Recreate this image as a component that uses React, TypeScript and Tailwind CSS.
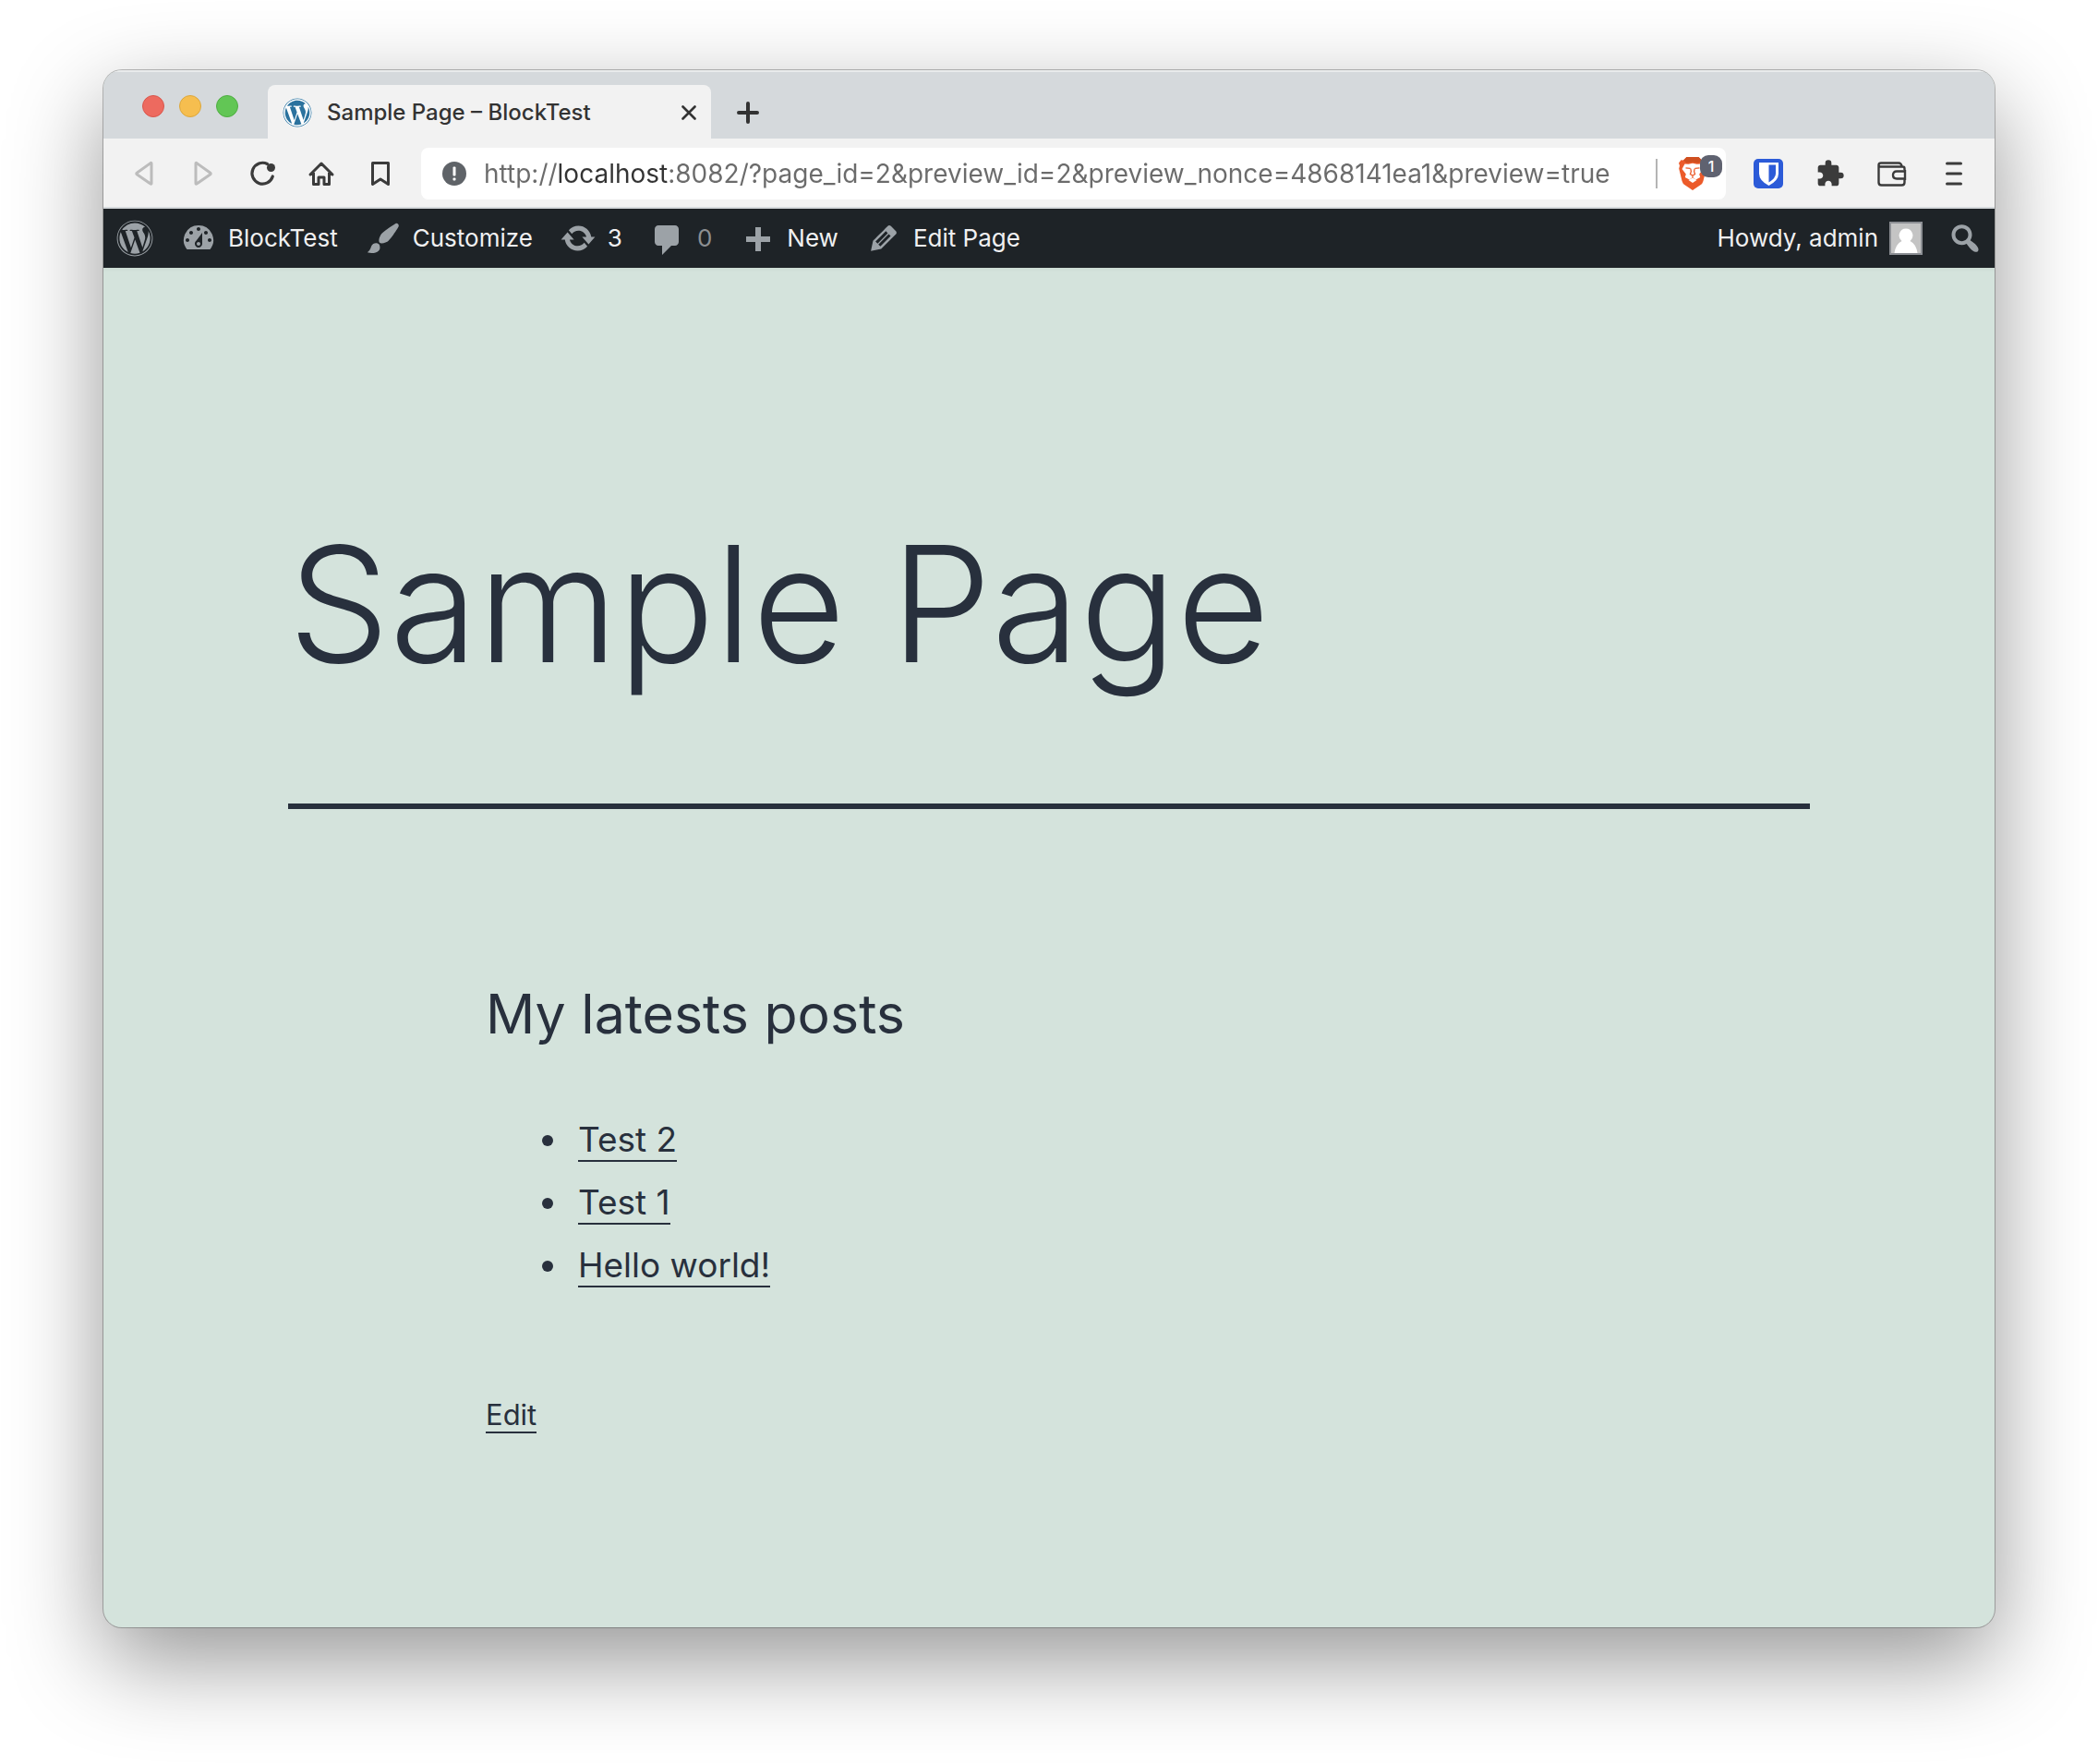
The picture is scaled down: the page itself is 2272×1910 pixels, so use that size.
import React from "react";
import { FaWordpress } from "react-icons/fa";
import { MdExtension } from "react-icons/md";

const UI = "font-['Inter','Liberation_Sans',sans-serif]";

const DASH = {
  dashboard:
    "M3.76 16h12.48A7.998 7.998 0 0 0 10 3a7.998 7.998 0 0 0-6.24 13zM10 4c.55 0 1 .45 1 1s-.45 1-1 1-1-.45-1-1 .45-1 1-1zM6 6c.55 0 1 .45 1 1s-.45 1-1 1-1-.45-1-1 .45-1 1-1zm8 0c.55 0 1 .45 1 1s-.45 1-1 1-1-.45-1-1 .45-1 1-1zm-5.37 5.55L12 7v6c0 1.1-.9 2-2 2s-2-.9-2-2c0-.57.24-1.08.63-1.45zM4 10c.55 0 1 .45 1 1s-.45 1-1 1-1-.45-1-1 .45-1 1-1zm12 0c.55 0 1 .45 1 1s-.45 1-1 1-1-.45-1-1 .45-1 1-1zm-5 3c0-.55-.45-1-1-1s-1 .45-1 1 .45 1 1 1 1-.45 1-1z",
  brush:
    "M18.33 3.57s.27-.8-.31-1.36c-.53-.52-1.22-.24-1.22-.24-.61.3-5.76 3.47-7.67 5.57-.86.96-2.06 3.79-1.09 4.82.92.98 3.96-.17 4.79-1 2.06-2.06 5.21-7.17 5.5-7.79zM1.4 17.65c2.37-1.56 1.46-3.41 3.23-4.64.93-.65 2.22-.62 3.08.29.63.67.8 2.57-.16 3.46-1.57 1.45-4 1.55-6.15.89z",
  update:
    "M10.2 3.28c3.53 0 6.43 2.61 6.92 6h2.08l-3.5 4-3.5-4h2.32c-.45-1.97-2.21-3.45-4.32-3.45-1.45 0-2.73.71-3.54 1.78L4.95 5.66C6.23 4.2 8.11 3.28 10.2 3.28zm-.4 13.44c-3.52 0-6.43-2.61-6.92-6H.8l3.5-4c1.17 1.33 2.33 2.67 3.5 4H5.48c.45 1.97 2.21 3.45 4.32 3.45 1.45 0 2.73-.71 3.54-1.78l1.71 1.95c-1.28 1.46-3.15 2.38-5.25 2.38z",
  comment:
    "M5 3h9c1.1 0 2 .9 2 2v7c0 1.1-.9 2-2 2h-2l-5 5v-5H5c-1.1 0-2-.9-2-2V5c0-1.1.9-2 2-2z",
  plus: "M17 9v3h-5v5H9v-5H4V9h5V4h3v5h5z",
  edit:
    "M13.89 3.39l2.71 2.72c.46.46.42 1.24.03 1.64l-8.01 8.02-5.56 1.16 1.16-5.58s7.6-7.63 7.99-8.03c.39-.39 1.22-.39 1.68.07zm-2.73 2.79l-5.59 5.61 1.11 1.11 5.54-5.65zm-2.97 8.23l5.58-5.6-1.07-1.08-5.59 5.6z",
  search:
    "M12.14 4.18c1.87 1.87 2.11 4.75.72 6.89.12.1.22.21.36.31.2.16.47.36.81.59.34.24.56.39.66.47.42.31.73.57.94.78.32.32.6.65.84 1 .25.35.44.69.59 1.04.14.35.21.68.18 1-.02.32-.14.59-.36.81s-.49.34-.81.36c-.31.02-.65-.04-.99-.19-.35-.14-.7-.34-1.04-.59-.35-.24-.68-.52-1-.84-.21-.21-.47-.52-.77-.93-.1-.13-.25-.35-.47-.66-.22-.32-.4-.57-.56-.78-.16-.2-.29-.35-.44-.5-2.07 1.09-4.69.76-6.44-.98-2.14-2.15-2.14-5.64 0-7.78 2.15-2.15 5.63-2.15 7.78 0zm-1.41 6.36c1.36-1.37 1.36-3.58 0-4.95-1.37-1.37-3.59-1.37-4.95 0-1.37 1.37-1.37 3.58 0 4.95 1.36 1.37 3.58 1.37 4.95 0z",
};

function Dashicon({ name }: { name: keyof typeof DASH }) {
  return (
    <svg viewBox="0 0 20 20" className="size-10 shrink-0 fill-[#9ca2a7]" aria-hidden="true">
      <path d={DASH[name]} />
    </svg>
  );
}

function TabStrip() {
  return (
    <div className="flex h-[74px] items-end bg-[#d5d9dc] shadow-[inset_0_2px_0_#e9ebec]">
      <div className="flex w-[178px] gap-4 self-center pl-[42px] pt-1">
        <button aria-label="Close window" className="size-6 rounded-full border border-[#d9574d] bg-[#ed6a5f]" />
        <button aria-label="Minimize window" className="size-6 rounded-full border border-[#dca73c] bg-[#f6be4f]" />
        <button aria-label="Zoom window" className="size-6 rounded-full border border-[#4fad42] bg-[#62c655]" />
      </div>
      <div className="flex h-[58px] w-[480px] items-center rounded-t-lg bg-[#f2f2f2] px-4 pt-[2px]">
        <FaWordpress className="size-8 rounded-full bg-white text-[#2b729e]" aria-hidden="true" />
        <span className="ml-4 flex-1 text-2xl font-medium text-[#333]">Sample Page – BlockTest</span>
        <button aria-label="Close tab">
          <svg viewBox="0 0 16 16" className="size-4" fill="none" stroke="#333" strokeWidth="2.6" strokeLinecap="round">
            <path d="M1.5 1.5l13 13M14.5 1.5l-13 13" />
          </svg>
        </button>
      </div>
      <button aria-label="New tab" className="flex h-[58px] items-center pl-7 pt-[2px]">
        <svg viewBox="0 0 24 24" className="size-6" fill="none" stroke="#333" strokeWidth="4" strokeLinecap="round">
          <path d="M12 2v20M2 12h20" />
        </svg>
      </button>
    </div>
  );
}

function Toolbar() {
  return (
    <div className="flex h-[76px] items-center border-b-2 border-[#d5d9dc] bg-[#f2f2f2] pt-[2px]">
      <div className="flex items-center gap-8 pl-7">
        <button aria-label="Back">
          <svg viewBox="0 0 32 32" className="size-8" fill="none" stroke="#bcbcbc" strokeWidth="3" strokeLinejoin="round">
            <path d="M24 5v21.500q0 1-1 .5L8.500 17q-1.500-1 0-2L23 4.600q1-.6 1 .4z" />
          </svg>
        </button>
        <button aria-label="Forward">
          <svg viewBox="0 0 32 32" className="size-8" fill="none" stroke="#bcbcbc" strokeWidth="3" strokeLinejoin="round">
            <path d="M8 5v21.500q0 1 1 .5L23.500 17q1.500-1 0-2L9 4.600q-1-.6-1 .4z" />
          </svg>
        </button>
        <button aria-label="Reload">
          <svg viewBox="0 0 32 32" className="size-8" fill="none" stroke="#3b3b3b" strokeWidth="3.200" strokeLinecap="round">
            <path d="M21.500 5.500A11.400 11.400 0 1 0 27.300 19" />
            <circle cx="25.500" cy="9.500" r="4.500" fill="#3b3b3b" stroke="none" />
          </svg>
        </button>
        <button aria-label="Home">
          <svg viewBox="0 0 32 32" className="size-8" fill="none" stroke="#3b3b3b" strokeWidth="3" strokeLinecap="round" strokeLinejoin="round">
            <path d="M4 17L16 5l12 12M7.500 15v12.500h5.500V20h6v7.500h5.500V15" />
          </svg>
        </button>
        <button aria-label="Bookmark">
          <svg viewBox="0 0 32 32" className="size-8" fill="none" stroke="#3b3b3b" strokeWidth="3" strokeLinejoin="round">
            <path d="M7.500 4.500h17v23L16 22l-8.500 5.500z" />
          </svg>
        </button>
      </div>
      <div className="ml-7 flex h-14 min-w-0 flex-1 items-center rounded-lg bg-white pl-[23px] pr-1">
        <svg viewBox="0 0 26 26" className="size-[26px] shrink-0" aria-hidden="true">
          <circle cx="13" cy="13" r="13" fill="#5f6368" />
          <rect x="11.500" y="5.500" width="3" height="10" rx="1" fill="#fff" />
          <rect x="11.500" y="17.500" width="3" height="3" rx="1" fill="#fff" />
        </svg>
        <input
          aria-label="Address"
          defaultValue="http://localhost:8082/?page_id=2&preview_id=2&preview_nonce=4868141ea1&preview=true"
          className="ml-[19px] h-10 min-w-0 flex-1 bg-[linear-gradient(90deg,#6b6b6b_81px,#333_81px,#333_201px,#6b6b6b_201px)] bg-clip-text text-[28px] text-transparent outline-none"
        />
        <span className="h-8 w-[2px] bg-[#b4b4b4]" />
        <button aria-label="Brave Shields" className="relative ml-[22px] h-9 w-12">
          <svg viewBox="0 0 32 36" className="h-9 w-8">
            <path
              d="M9.500 0h13l3.500 3.500 2.500-.3L31 6.500 30 9.500l.8 3-3.300 13.500q-.8 3-3 4.300L16 36l-8.500-5.700q-2.200-1.300-3-4.300L1.200 12.500l.8-3-1-3L3.500 3.200 6 3.500z"
              fill="#ec5b2a"
            />
            <path d="M9.500 0h13l3.500 3.500-3.500 3L16 5.500 9.500 6.500 6 3.500z" fill="#cf4f20" />
            <path
              d="M7.500 7.500l4 .3 4.500-1 4.500 1 4-.3 3 5.500-4.300 5.500 1 3.500-4.700 2.500L16 22l-3.500 2.500L7.800 22l1-3.500L4.500 13z"
              fill="#fff"
            />
            <path
              d="M8.500 11.800l5 .6M23.500 11.800l-5 .6M13.800 12.500l.6 3.300-1 2.600 2.600 1.800 2.600-1.800-1-2.600.6-3.300M16 20v2.500"
              fill="none"
              stroke="#ec5b2a"
              strokeWidth="1.300"
            />
            <path d="M11.500 25l4.500-2.600 4.500 2.600-4.500 3z" fill="#fff" />
          </svg>
          <span className="absolute -top-[2px] right-0 flex size-6 items-center justify-center rounded-[9px] bg-[#5f6270] text-[16px] font-medium text-white">
            1
          </span>
        </button>
      </div>
      <div className="flex items-center gap-[35px] pl-[30px] pr-7">
        <button aria-label="Bitwarden">
          <svg viewBox="0 0 32 32" className="size-8">
            <rect width="32" height="32" rx="5" fill="#2c5bd8" />
            <path d="M6 4h21v12q0 7.500-10.500 13Q6 23.500 6 16z" fill="#fff" />
            <path d="M16.500 6.500H24V16q0 5-7.500 9.500z" fill="#2c5bd8" />
          </svg>
        </button>
        <button aria-label="Extensions">
          <MdExtension className="size-8 text-[#3b3b3b]" />
        </button>
        <button aria-label="Wallet">
          <svg viewBox="0 0 32 32" className="size-8" fill="none" stroke="#3b3b3b" strokeWidth="2.400" strokeLinejoin="round">
            <path d="M29.500 12v-1.500q0-2-2-2H4Q1.500 8.500 1.500 6.500T4 4.500h19q1.500 0 2.500 1L27 8.500M1.500 6.500v19q0 3 3 3h22q3 0 3-3v-3" />
            <path d="M30 12v11M30 13.500H21q-4 0-4 4t4 4h9" />
          </svg>
        </button>
        <button aria-label="Menu">
          <svg viewBox="0 0 32 32" className="size-8" stroke="#3b3b3b" strokeWidth="3" strokeLinecap="round">
            <path d="M8.500 5h15M8.500 16h15M8.500 27h15" />
          </svg>
        </button>
      </div>
    </div>
  );
}

function AdminBar() {
  return (
    <nav aria-label="Toolbar" className="flex h-16 items-center bg-[#1e2327] text-[26px] leading-10 text-[#f0f0f1]">
      <a href="#about" aria-label="About WordPress" className="ml-[14px]">
        <FaWordpress className="size-10 text-[#9ca2a7]" />
      </a>
      <a href="#site" className="ml-[29px] flex items-center gap-3">
        <Dashicon name="dashboard" />
        BlockTest
      </a>
      <a href="#customize" className="ml-[29px] flex items-center gap-3">
        <Dashicon name="brush" />
        Customize
      </a>
      <a href="#updates" className="ml-[29px] flex items-center gap-3">
        <Dashicon name="update" />3
      </a>
      <a href="#comments" className="ml-[29px] flex items-center gap-3">
        <Dashicon name="comment" />
        <span className="text-[#8c8f92]">0</span>
      </a>
      <a href="#new" className="ml-[29px] flex items-center gap-3">
        <Dashicon name="plus" />
        New
      </a>
      <a href="#edit-page" className="ml-[29px] flex items-center gap-3">
        <Dashicon name="edit" />
        Edit Page
      </a>
      <a href="#profile" className="ml-auto flex items-center gap-3">
        Howdy, admin
        <svg viewBox="0 0 36 36" className="size-9" aria-hidden="true">
          <rect width="36" height="36" fill="#8c8f94" />
          <rect x="2" y="2" width="32" height="32" fill="#c4c4c4" />
          <path d="M18 7.500a7.500 7.500 0 0 1 4.500 13.400Q29 24 30.500 34h-25Q7 24 13.500 20.900A7.500 7.500 0 0 1 18 7.500z" fill="#fff" />
        </svg>
      </a>
      <button aria-label="Search" className="ml-[26px] mr-3">
        <Dashicon name="search" />
      </button>
    </nav>
  );
}

const POSTS = ["Test 2", "Test 1", "Hello world!"];

export default function App() {
  return (
    <div className={`${UI} flex min-h-screen flex-col overflow-hidden bg-white px-28 pb-[148px] pt-[76px]`}>
      <div className="flex flex-1 flex-col overflow-hidden rounded-[20px] bg-[#d4e3dc] shadow-[0_0_0_1px_rgba(0,0,0,0.25),0_36px_100px_rgba(0,0,0,0.42)]">
        <TabStrip />
        <Toolbar />
        <AdminBar />
        <main className="flex-1 px-[200px] text-[#28303d] shadow-[inset_0_4px_4px_-2px_rgba(0,0,0,0.04)]">
          <header className="border-b-[6px] border-[#28303d] pb-[104px] pt-[252px]">
            <h1 className="text-[174px] font-light leading-[224px]">Sample Page</h1>
          </header>
          <div className="mx-auto max-w-[1220px] pt-[182px]">
            <h2 className="text-[59px] leading-[80px]">My latests posts</h2>
            <ul className="mt-[63px] list-disc pl-[92px] text-[37px] leading-[66px]">
              {POSTS.map((post) => (
                <li key={post} className="h-[68px] pl-2">
                  <a href="#post" className="border-b-2 border-[#28303d]">
                    {post}
                  </a>
                </li>
              ))}
            </ul>
            <p className="mt-[100px] text-[31px] leading-[54px]">
              <a href="#edit" className="border-b-2 border-[#28303d]">
                Edit
              </a>
            </p>
          </div>
        </main>
      </div>
    </div>
  );
}
